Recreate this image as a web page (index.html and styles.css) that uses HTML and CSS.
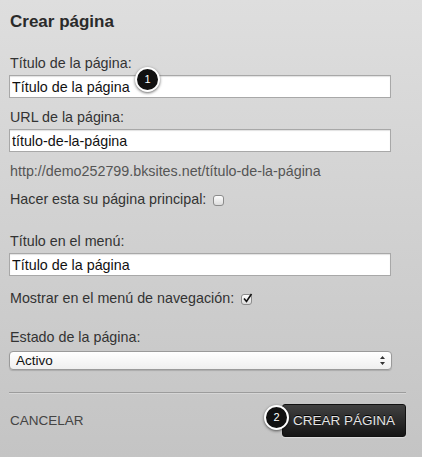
FILE: index.html
```html
<!DOCTYPE html>
<html lang="es">
<head>
    <meta charset="UTF-8">
    <meta name="viewport" content="width=device-width, initial-scale=1.0">
    <title>Crear página</title>
    <link rel="stylesheet" href="styles.css">
</head>
<body>
    <div class="dialog">
        <h1>Crear página</h1>

        <form class="page-form">
            <div class="field field-title">
                <label for="pageTitle">Título de la página:</label>
                <input type="text" id="pageTitle" value="Título de la página">
                <span class="badge badge-one">1</span>
            </div>

            <div class="field field-url">
                <label for="pageUrl">URL de la página:</label>
                <input type="text" id="pageUrl" value="título-de-la-página">
            </div>

            <p class="url-preview">http://demo252799.bksites.net/título-de-la-página</p>

            <div class="check-row check-home">
                <span>Hacer esta su página principal:</span>
                <span class="checkbox"></span>
            </div>

            <div class="field field-menu">
                <label for="menuTitle">Título en el menú:</label>
                <input type="text" id="menuTitle" value="Título de la página">
            </div>

            <div class="check-row check-nav">
                <span>Mostrar en el menú de navegación:</span>
                <span class="checkbox checked">
                    <svg width="11" height="11" viewBox="0 0 11 11">
                        <path d="M2 5.5 L4.5 8.5 L9.5 1" fill="none" stroke="#111" stroke-width="1.6"/>
                    </svg>
                </span>
            </div>

            <div class="field field-state">
                <label>Estado de la página:</label>
                <div class="select">
                    <span>Activo</span>
                    <svg width="7" height="11" viewBox="0 0 7 11">
                        <path d="M3.5 1 L6 4 L1 4 Z M3.5 10 L6 7 L1 7 Z" fill="#333"/>
                    </svg>
                </div>
            </div>
        </form>

        <hr>

        <div class="footer">
            <a href="#" class="cancel">CANCELAR</a>
            <div class="submit-wrap">
                <span class="badge badge-two">2</span>
                <button type="button" class="submit">CREAR PÁGINA</button>
            </div>
        </div>
    </div>
</body>
</html>
```

FILE: styles.css
```css
html, body {
    margin: 0;
    height: 100%;
}
body {
    font-family: "Liberation Sans", Arial, sans-serif;
    background: linear-gradient(#dedede, #c4c4c4);
    color: #333;
}
.dialog {
    padding: 12px 16px 0 9px;
}
h1 {
    margin: 0 0 0 1px;
    font-size: 17px;
    line-height: 20px;
    color: #2a2a2a;
}
.page-form {
    display: flex;
    flex-direction: column;
}
.field {
    position: relative;
    display: flex;
    flex-direction: column;
}
.field label, .check-row, .url-preview {
    font-size: 14.3px;
    line-height: 16px;
    margin-left: 1px;
}
.field label {
    margin-bottom: 4px;
}
.field-title {
    margin-top: 23px;
}
.field-url {
    margin-top: 11px;
}
.field-menu {
    margin-top: 26px;
}
.field-state {
    margin-top: 23px;
}
.field-state label {
    margin-bottom: 6px;
}
input[type="text"] {
    box-sizing: border-box;
    width: 382px;
    height: 23px;
    margin: 0;
    padding: 0 2px;
    border: 1px solid #a8a8a8;
    background: #fff;
    box-shadow: inset 0 1px 1px rgba(0, 0, 0, 0.12);
    font-family: inherit;
    font-size: 14.3px;
    color: #111;
    outline: none;
}
.url-preview {
    margin: 11px 0 0 1px;
    color: #555;
}
.check-row {
    display: flex;
    align-items: center;
    gap: 7px;
}
.check-home {
    margin-top: 12px;
}
.check-nav {
    margin-top: 14px;
}
.checkbox {
    box-sizing: border-box;
    width: 11px;
    height: 11px;
    border: 1px solid #8c8c8c;
    border-radius: 3px;
    background: linear-gradient(#fdfdfd, #dcdcdc);
    position: relative;
    top: 1px;
}
.checkbox svg {
    position: absolute;
    left: 0;
    top: -2px;
}
.select {
    box-sizing: border-box;
    width: 383px;
    height: 19px;
    display: flex;
    align-items: center;
    justify-content: space-between;
    padding: 0 5px 0 6px;
    border: 1px solid #9a9a9a;
    border-radius: 4px;
    background: linear-gradient(#ffffff, #efefef);
    box-shadow: 0 1px 1px rgba(0, 0, 0, 0.15);
    font-size: 13.5px;
    color: #111;
}
hr {
    width: 397px;
    margin: 22px 0 0;
    border: 0;
    border-top: 1px solid #9c9c9c;
    border-bottom: 1px solid #d6d6d6;
    height: 0;
}
.footer {
    display: flex;
    justify-content: space-between;
    align-items: center;
    width: 397px;
    margin-top: 10px;
}
.cancel {
    margin-left: 1px;
    font-size: 13.5px;
    color: #444;
    text-decoration: none;
}
.submit-wrap {
    position: relative;
}
.submit {
    width: 124px;
    height: 33px;
    border: 1px solid #111;
    border-radius: 3px;
    background: linear-gradient(#414141, #151515);
    color: #e4e4e4;
    font-family: inherit;
    font-size: 13.5px;
    padding: 0;
    text-shadow: 0 -1px 0 #000;
    box-shadow: 0 1px 1px rgba(255, 255, 255, 0.4);
}
.badge {
    position: absolute;
    box-sizing: border-box;
    width: 25px;
    height: 25px;
    border-radius: 50%;
    border: 2px solid #fff;
    background: #111;
    color: #fff;
    font-size: 11px;
    line-height: 21px;
    text-align: center;
    box-shadow: 0 1px 3px rgba(0, 0, 0, 0.6);
    z-index: 2;
}
.badge-one {
    left: 126px;
    top: 12px;
}
.badge-two {
    left: -18px;
    top: 1px;
}
```
